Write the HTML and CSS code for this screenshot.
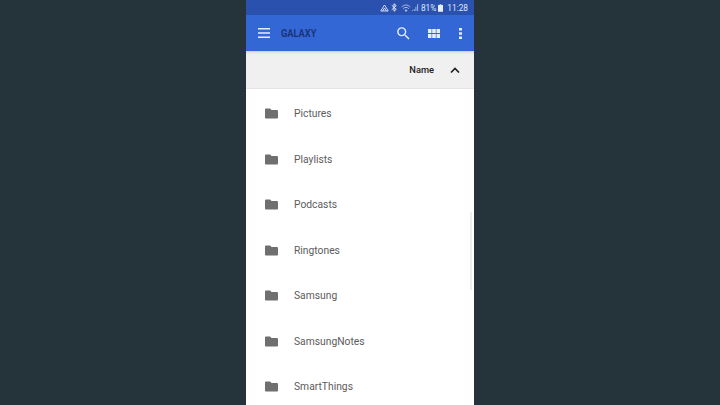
FILE: index.html
```html
<!DOCTYPE html>
<html lang="en">
<head>
    <meta charset="UTF-8">
    <title>GALAXY</title>
    <link rel="stylesheet" href="styles.css">
</head>
<body>
    <div class="phone">
        <div class="status-bar">
            <svg class="st-icon" viewBox="0 0 12 10" width="9" height="8"><path fill="none" stroke="#dfe7fa" stroke-width="1.200" d="M6 1 1 9h10zM3.500 9 6 5l2.500 4"/></svg>
            <svg class="st-icon" viewBox="0 0 8 12" width="6" height="9"><path fill="none" stroke="#e6edfc" stroke-width="1.300" d="M1 3l6 5.500L4 11V1l3 2.500L1 9"/></svg>
            <svg class="st-icon wifi" viewBox="0 0 14 11" width="10" height="8"><path fill="none" stroke="#b4c5ee" stroke-width="1.300" d="M1 4c3.500-3.500 8.500-3.500 12 0M3 6.300c2.400-2.200 5.600-2.200 8 0"/><path fill="#b4c5ee" d="M7 11 4.800 8.400c1.300-1 3.100-1 4.400 0z"/></svg>
            <svg class="st-icon signal" viewBox="0 0 8 8" width="7" height="7"><path fill="#b4c5ee" d="M0 7h1v1H0zM2 6h1v2H2zM4 3h1v5H4zM6 0h1v8H6z"/></svg>
            <span class="st-text">81%</span>
            <svg class="st-icon" viewBox="0 0 6 9" width="5" height="8"><path fill="#e6edfc" d="M2 0h2v1h2v8H0V1h2z"/></svg>
            <span class="st-text clock">11:28</span>
        </div>
        <header class="toolbar">
            <svg class="menu-icon" viewBox="0 0 12 10" width="12" height="10"><path fill="#e6edfc" d="M0 0h12v1.500H0zM0 4.200h12v1.500H0zM0 8.500h12V10H0z"/></svg>
            <span class="title">GALAXY</span>
            <svg class="search-icon" viewBox="0 0 24 24" width="17" height="17"><path fill="#e6edfc" d="M15.500 14h-.79l-.28-.27A6.470 6.470 0 0 0 16 9.500 6.500 6.500 0 1 0 9.500 16c1.610 0 3.090-.59 4.230-1.570l.27.28v.79l5 4.990L20.490 19zm-6 0C7.010 14 5 11.990 5 9.500S7.010 5 9.500 5 14 7.010 14 9.500 11.990 14 9.500 14z"/></svg>
            <svg class="grid-icon" viewBox="0 0 12 9" width="12" height="9"><path fill="#e6edfc" d="M0 0h3.500v4H0zM4.200 0h3.600v4H4.200zM8.500 0H12v4H8.500zM0 5h3.500v4H0zM4.200 5h3.600v4H4.200zM8.500 5H12v4H8.500z"/></svg>
            <svg class="more-icon" viewBox="0 0 3 11" width="3" height="11"><path fill="#e6edfc" d="M0 0h3v2.500H0zM0 4.200h3v2.500H0zM0 8.500h3V11H0z"/></svg>
        </header>
        <div class="sort-bar">
            <span class="sort-name">Name</span>
            <svg class="sort-arrow" viewBox="0 0 10 6" width="10" height="6"><path fill="none" stroke="#1f1f1f" stroke-width="1.600" d="M1 5.500l4-4 4 4"/></svg>
        </div>
        <ul class="file-list">
            <li class="file-row"><svg class="folder" viewBox="0 0 14 11" width="13" height="11"><path d="M5.500 0H1.300C.6 0 0 .6 0 1.300v8.400C0 10.400.6 11 1.300 11h11.400c.7 0 1.300-.6 1.300-1.300V3c0-.7-.6-1.300-1.300-1.300H7z"/></svg><span>Pictures</span></li>
            <li class="file-row"><svg class="folder" viewBox="0 0 14 11" width="13" height="11"><path d="M5.500 0H1.300C.6 0 0 .6 0 1.300v8.400C0 10.400.6 11 1.300 11h11.400c.7 0 1.300-.6 1.300-1.300V3c0-.7-.6-1.300-1.300-1.300H7z"/></svg><span>Playlists</span></li>
            <li class="file-row"><svg class="folder" viewBox="0 0 14 11" width="13" height="11"><path d="M5.500 0H1.300C.6 0 0 .6 0 1.300v8.400C0 10.400.6 11 1.300 11h11.400c.7 0 1.300-.6 1.300-1.300V3c0-.7-.6-1.300-1.300-1.300H7z"/></svg><span>Podcasts</span></li>
            <li class="file-row"><svg class="folder" viewBox="0 0 14 11" width="13" height="11"><path d="M5.500 0H1.300C.6 0 0 .6 0 1.300v8.400C0 10.400.6 11 1.300 11h11.400c.7 0 1.300-.6 1.300-1.300V3c0-.7-.6-1.300-1.300-1.300H7z"/></svg><span>Ringtones</span></li>
            <li class="file-row"><svg class="folder" viewBox="0 0 14 11" width="13" height="11"><path d="M5.500 0H1.300C.6 0 0 .6 0 1.300v8.400C0 10.400.6 11 1.300 11h11.400c.7 0 1.300-.6 1.300-1.300V3c0-.7-.6-1.300-1.300-1.300H7z"/></svg><span>Samsung</span></li>
            <li class="file-row"><svg class="folder" viewBox="0 0 14 11" width="13" height="11"><path d="M5.500 0H1.300C.6 0 0 .6 0 1.300v8.400C0 10.400.6 11 1.300 11h11.400c.7 0 1.300-.6 1.300-1.300V3c0-.7-.6-1.300-1.300-1.300H7z"/></svg><span>SamsungNotes</span></li>
            <li class="file-row"><svg class="folder" viewBox="0 0 14 11" width="13" height="11"><path d="M5.500 0H1.300C.6 0 0 .6 0 1.300v8.400C0 10.400.6 11 1.300 11h11.400c.7 0 1.300-.6 1.300-1.300V3c0-.7-.6-1.300-1.300-1.300H7z"/></svg><span>SmartThings</span></li>
        </ul>
        <div class="scroll-thumb"></div>
    </div>
</body>
</html>
```

FILE: styles.css
```css
html, body {
    height: 100%;
}
body {
    margin: 0;
    background-color: #25343b;
    font-family: Roboto, "Liberation Sans", sans-serif;
    overflow: hidden;
}
.phone {
    position: relative;
    width: 228px;
    height: 405px;
    margin: 0 auto;
    background-color: #fff;
    overflow: hidden;
}
.status-bar {
    height: 15px;
    padding-right: 6px;
    background-color: #2a51ad;
    display: flex;
    justify-content: flex-end;
    align-items: center;
    gap: 2px;
}
.st-icon {
    flex-shrink: 0;
}
.wifi {
    margin-left: 2px;
    margin-right: -1px;
}
.st-text {
    font-size: 8.300px;
    color: #dfe7fa;
}
.clock {
    margin-left: 2px;
}
.toolbar {
    height: 36px;
    background-color: #3367d6;
    display: flex;
    align-items: center;
    box-sizing: border-box;
    padding-left: 12px;
}
.menu-icon {
    margin-right: 11px;
}
.title {
    flex: 1;
    font-size: 10.500px;
    font-weight: 700;
    color: #1b3478;
    transform: scaleX(0.88);
    transform-origin: left center;
}
.search-icon {
    margin-right: 16px;
}
.grid-icon {
    margin-right: 19px;
}
.more-icon {
    margin-right: 12px;
}
.sort-bar {
    height: 37px;
    background-color: #f0f0f0;
    border-bottom: 1px solid #e4e4e4;
    box-shadow: inset 0 3px 3px -2px rgba(0, 0, 0, 0.18);
    display: flex;
    justify-content: flex-end;
    align-items: center;
    padding-right: 14px;
}
.sort-name {
    font-size: 9.300px;
    font-weight: 500;
    color: #222;
    margin-right: 16px;
}
.file-list {
    list-style-type: none;
    margin: 0;
    padding: 2px 0 0;
}
.file-row {
    height: 45.500px;
    padding-left: 19px;
    display: flex;
    align-items: center;
    font-size: 10.300px;
    color: #5c5c5c;
}
.folder {
    fill: #6f6f6f;
    margin-right: 16px;
}
.scroll-thumb {
    position: absolute;
    top: 212px;
    right: 2px;
    width: 2px;
    height: 78px;
    background-color: #eee;
}
```
